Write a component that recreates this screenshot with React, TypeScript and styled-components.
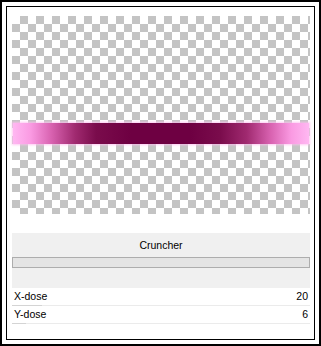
import React from 'react'
import styled, { createGlobalStyle } from 'styled-components'

const GlobalStyle = createGlobalStyle`
  html, body {
    margin: 0;
    padding: 0;
    background: #fff;
  }
  body {
    font-family: "Liberation Sans", Arial, sans-serif;
    color: #000;
  }
`

const Frame = styled.div`
  width: 321px;
  height: 346px;
  box-sizing: border-box;
  border: 2px solid #000;
  padding: 4px;
  background: #fff;
`

const Inner = styled.div`
  height: 100%;
  box-sizing: border-box;
  border: 1px solid #000;
  padding: 9px 4px 0 5px;
  display: flex;
  flex-direction: column;
`

const Preview = styled.div`
  height: 198px;
  padding: 107px 1px 0;
  box-sizing: border-box;
  background: conic-gradient(#c4c4c4 25%, #fff 0 50%, #c4c4c4 0 75%, #fff 0);
  background-size: 16px 16px;
`

const Stroke = styled.div`
  height: 21px;
  background: linear-gradient(
    to right,
    #ffb8f2 0%,
    #fa9ae2 6%,
    #d862b0 13%,
    #a02a70 21%,
    #7a0c4c 28%,
    #6e0042 40%,
    #6e0042 60%,
    #7a0c4c 70%,
    #a02a70 79%,
    #d862b0 87%,
    #fa9ae2 94%,
    #ffb8f2 100%
  );
  box-shadow: 0 0 2px 1px rgba(255, 190, 240, 0.8);
`

const Panel = styled.div`
  margin-top: 19px;
  height: 55px;
  box-sizing: border-box;
  padding-top: 4px;
  background: #f0f0f0;
  display: flex;
  flex-direction: column;
  gap: 4px;
`

const Title = styled.div`
  font-size: 10.5px;
  line-height: 16px;
  text-align: center;
`

const Track = styled.div`
  height: 11px;
  box-sizing: border-box;
  border: 1px solid #adadad;
  background: #e4e4e4;
`

const Row = styled.div`
  position: relative;
  height: 18px;
  box-sizing: border-box;
  padding: 0 2px;
  border-bottom: 1px solid #ebebeb;
  display: flex;
  justify-content: space-between;
  align-items: flex-start;
  font-size: 10.5px;
  line-height: 17px;
`

const Fill = styled.div`
  position: absolute;
  left: 0;
  bottom: -1px;
  height: 1px;
  background: #d4d4d4;
`

interface Param {
  label: string
  value: number
  max: number
}

const params: Param[] = [
  { label: 'X-dose', value: 20, max: 200 },
  { label: 'Y-dose', value: 6, max: 200 },
]

const App: React.FC = (): JSX.Element => {
  return (
    <>
      <GlobalStyle />
      <Frame>
        <Inner>
          <Preview>
            <Stroke />
          </Preview>
          <Panel>
            <Title>Cruncher</Title>
            <Track />
          </Panel>
          {params.map((p) => (
            <Row key={p.label}>
              <span>{p.label}</span>
              <span>{p.value}</span>
              <Fill style={{ width: `${Math.max(14, (p.value / p.max) * 298)}px` }} />
            </Row>
          ))}
        </Inner>
      </Frame>
    </>
  )
}

export default App
